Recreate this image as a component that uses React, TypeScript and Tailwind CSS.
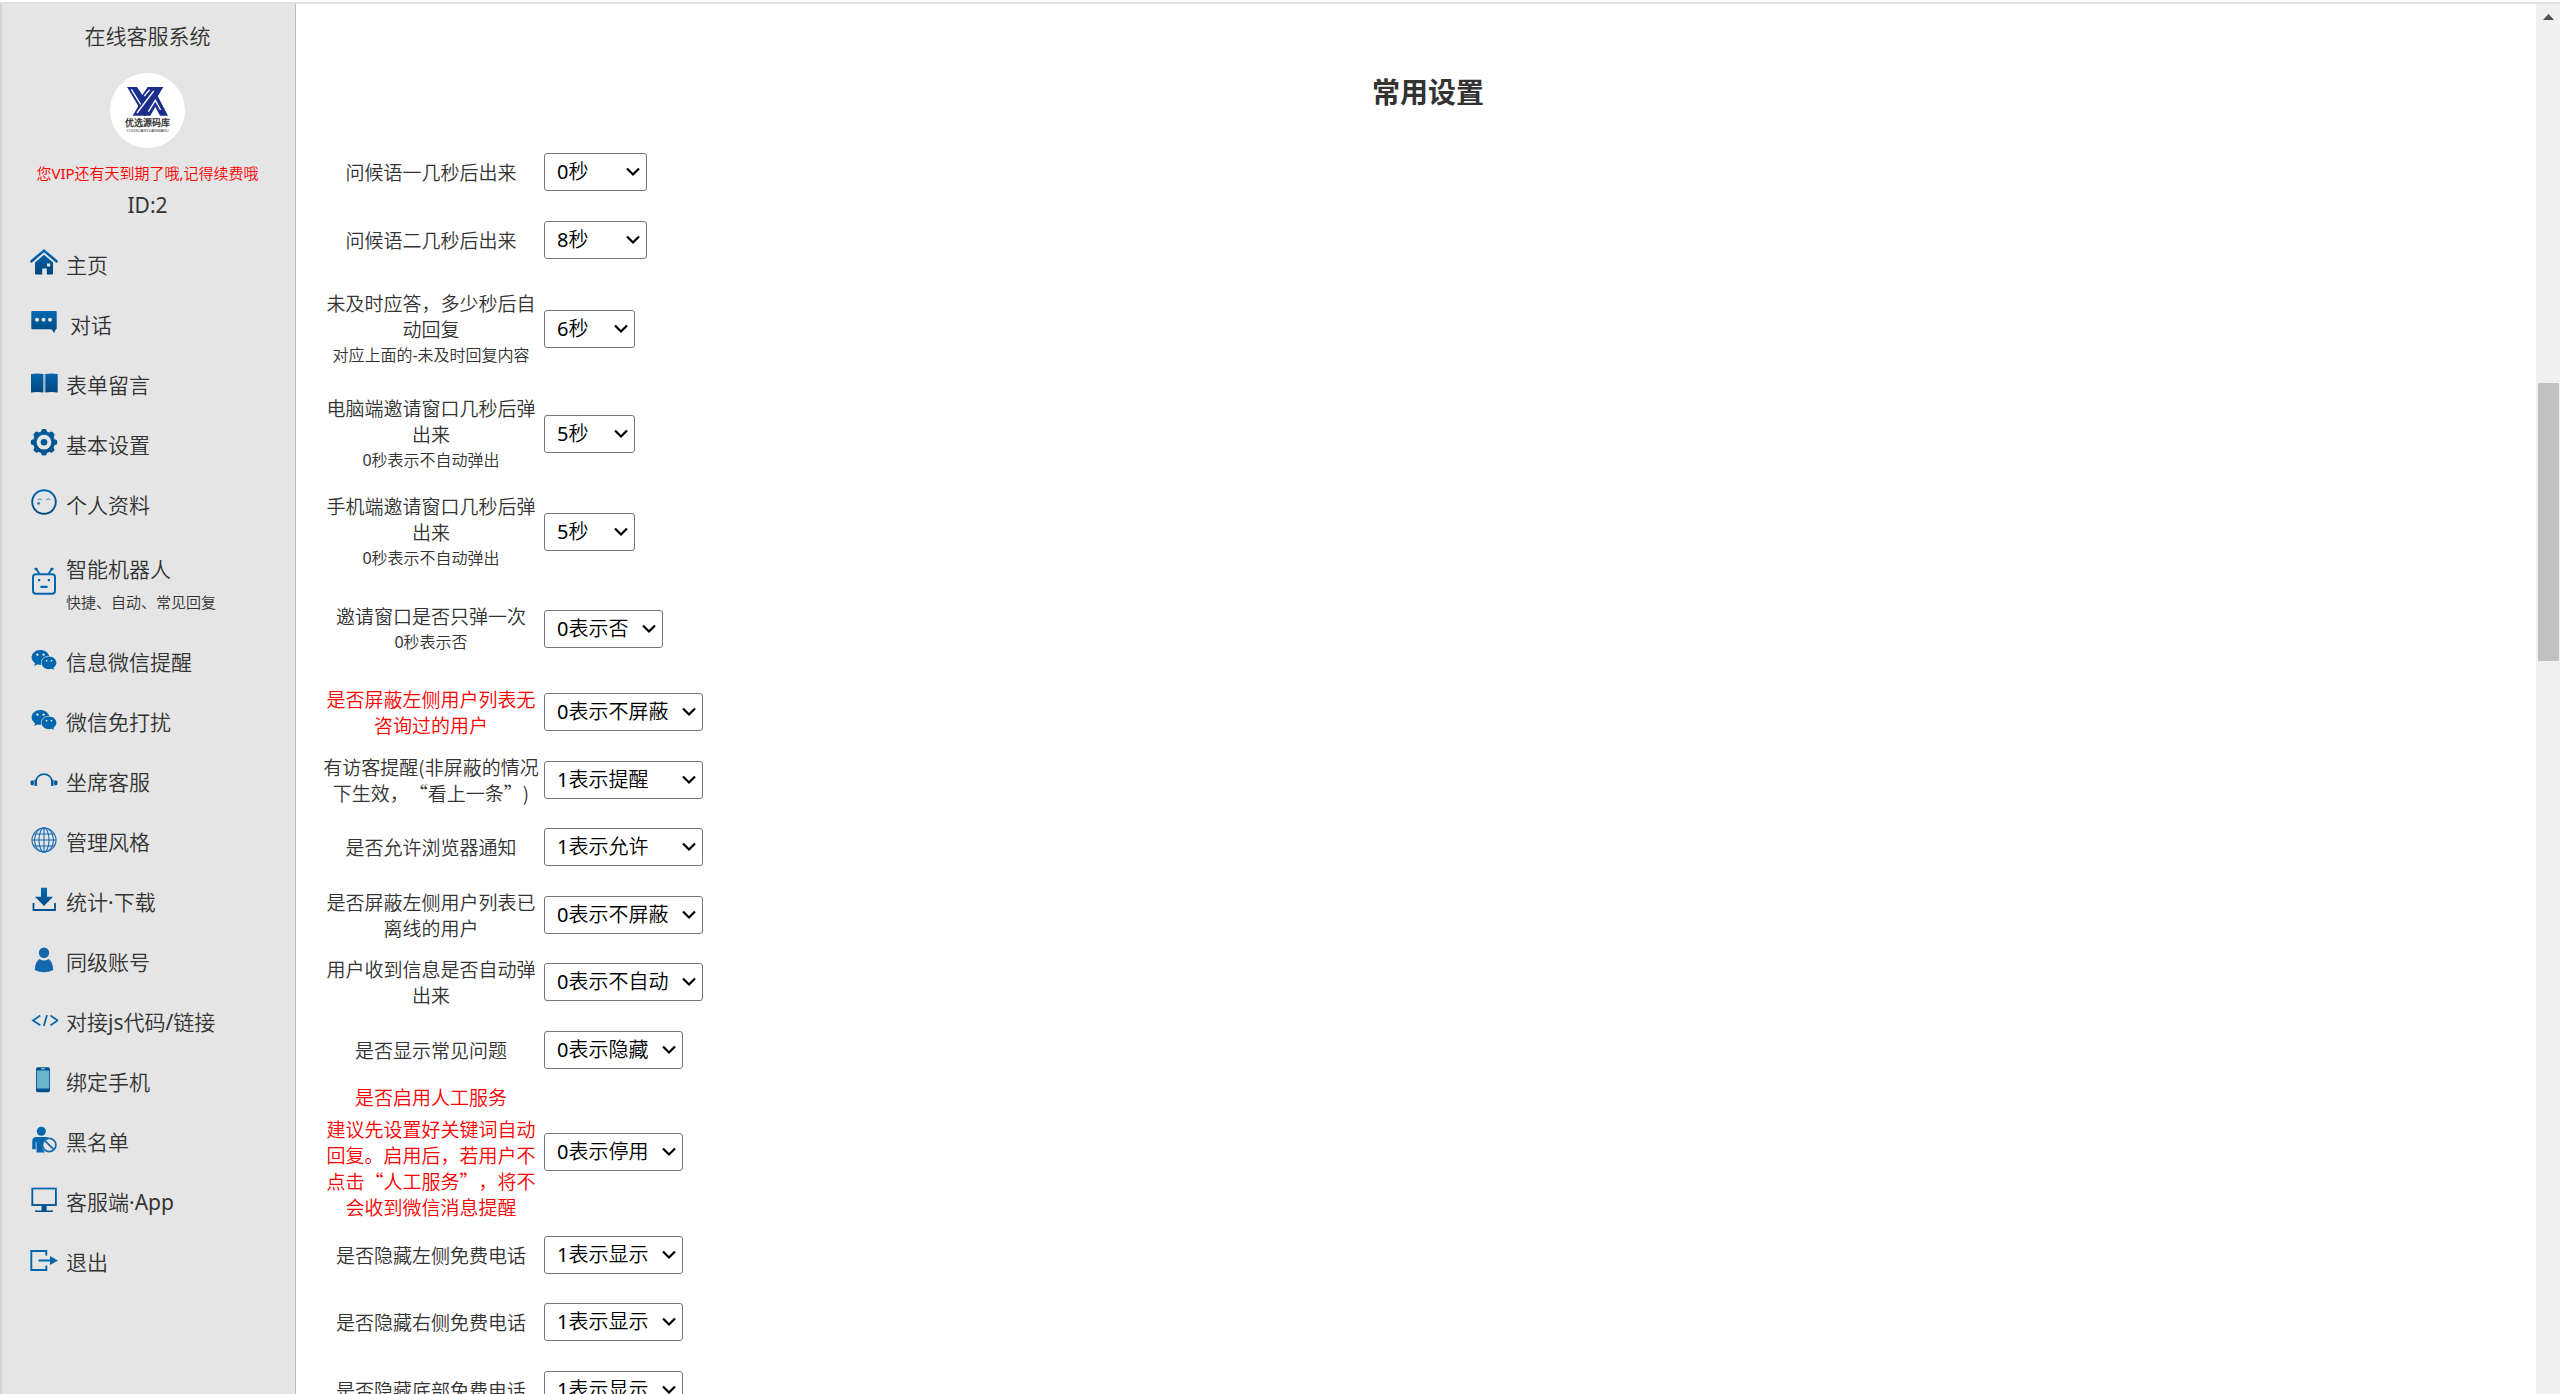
import type { ReactNode } from 'react'
import { FaWeixin } from 'react-icons/fa'

interface NavItem {
    label: string
    icon: ReactNode
    note?: string
    indent?: boolean
}

interface Setting {
    id: string
    label: string
    note?: string
    extra?: string
    red?: boolean
    height?: string
    width: string
    options: string[]
}

function Icon({ children }: { children: ReactNode }) {
    return (
        <svg className="w-7 h-7" viewBox="0 0 28 28" fill="none" aria-hidden="true">
            {children}
        </svg>
    )
}

const HomeIcon = () => (
    <Icon>
        <path d="M1.5 13.3 14 2.6l12.5 10.7" stroke="url(#blue)" strokeWidth="2.6" strokeLinecap="round" />
        <path
            fill="url(#blue)"
            fillRule="evenodd"
            d="M14 6.8l9 7.6v11.2q0 1-1 1h-5.2v-6h-4.6v6H6q-1 0-1-1V14.4zM17 15.4v3.2h3.2v-3.2z"
        />
    </Icon>
)

const ChatIcon = () => (
    <Icon>
        <path
            fill="url(#blue)"
            fillRule="evenodd"
            d="M2.3 3h23.4q1 0 1 1v16.5q0 .8-1 .9l-1.8 3.9q-1.3-3.9-3.2-4.1H2.3q-1 0-1-1V4q0-1 1-1zM7 9.8a2 2 0 1 0 .01 0zM13.5 9.8a2 2 0 1 0 .01 0zM20 9.8a2 2 0 1 0 .01 0z"
        />
    </Icon>
)

const BookIcon = () => (
    <Icon>
        <path fill="url(#blue)" d="M1 5.9q6.2-1 12.4 0v18.5q-6.2-1-12.4 0zM15.3 5.9q6.2-1 12.4 0v18.5q-6.2-1-12.4 0z" />
        <path d="M14.35 6v18" stroke="#8fb0cb" strokeWidth="1" />
    </Icon>
)

const GearIcon = () => (
    <Icon>
        <circle cx="14" cy="14.2" r="9.2" stroke="url(#blue)" strokeWidth="3.6" />
        <circle cx="14" cy="14.2" r="3.3" fill="#005796" />
        {[0, 45, 90, 135, 180, 225, 270, 315].map((deg) => (
            <rect
                key={deg}
                x="11.2"
                y="1"
                width="5.6"
                height="5"
                rx="2"
                fill="#005796"
                transform={`rotate(${deg} 14 14.2)`}
            />
        ))}
    </Icon>
)

const FaceIcon = () => (
    <Icon>
        <circle cx="14" cy="14" r="11.8" stroke="url(#blue)" strokeWidth="2" />
        <path d="M7.8 12l2-1.3 2 1.3M16.3 12l2-1.3 2 1.3" stroke="#3b82b8" strokeWidth="1" />
        <rect x="7" y="14.3" width="3" height="2.2" fill="#3b82b8" />
    </Icon>
)

const RobotIcon = () => (
    <Icon>
        <g stroke="#0068b0" strokeWidth="2" strokeLinecap="round">
            <rect x="3" y="7.2" width="22" height="19.5" rx="3" />
            <path d="M9.3 6.5 5.8 1.5M18.7 6.5l3.5-5" />
            <path d="M11.2 19.8h5.6" strokeWidth="2.2" />
        </g>
        <path fill="#0068b0" d="M8 12h2.2v2.2H8zM17.8 12H20v2.2h-2.2zM4.5 1h3v2h-3zM20.5 1h3v2h-3z" />
    </Icon>
)

const WechatIcon = () => <FaWeixin className="w-[26px] h-7 mx-px pt-0.5" color="#0066ad" aria-hidden="true" />

const HeadsetIcon = () => (
    <Icon>
        <path d="M6 17C6 6.5 22 6.5 22 17" stroke="#0062a8" strokeWidth="1.6" />
        <rect x="0.5" y="15.2" width="3.4" height="5.2" rx="1.7" fill="#00589a" />
        <rect x="24.1" y="15.2" width="3.4" height="5.2" rx="1.7" fill="#00589a" />
        <path d="M5.7 14.6v6.4M22.3 14.6v6.4" stroke="#00589a" strokeWidth="2.4" />
    </Icon>
)

const GlobeIcon = () => (
    <Icon>
        <g stroke="#1a6bae" strokeWidth="1.1">
            <circle cx="14" cy="15" r="12" />
            <ellipse cx="14" cy="15" rx="5" ry="12" />
            <ellipse cx="14" cy="15" rx="9.5" ry="12" />
            <path d="M14 3v24M2 15h24M4 9h20M4 21h20" />
        </g>
    </Icon>
)

const DownloadIcon = () => (
    <Icon>
        <path fill="url(#blue)" d="M11 2.8h6v9h6L14 21 5 11.8h6z" />
        <path d="M3.5 18v7h21.5v-7" stroke="#005190" strokeWidth="1.8" />
    </Icon>
)

const UserIcon = () => (
    <Icon>
        <circle cx="14" cy="7.8" r="5.2" fill="#1468ad" />
        <path fill="#1468ad" d="M9.5 14Q14 17 18.5 14 23 17 23.3 25 14 29.5 4.7 25 5 17 9.5 14z" />
    </Icon>
)

const CodeIcon = () => (
    <Icon>
        <path d="M10.3 10.6 3 15.4l7.3 4.8M20.5 10.6l7.3 4.8-7.3 4.8M17 10l-3.2 11" stroke="#0a66ad" strokeWidth="1.8" />
    </Icon>
)

const PhoneIcon = () => (
    <Icon>
        <rect x="6" y="2.2" width="14" height="25" rx="2" fill="#00508f" />
        <rect x="6.8" y="5.5" width="12.4" height="18" fill="#66b5cc" />
        <path d="M11 3.8h4" stroke="#c9dbe8" strokeWidth="1" />
    </Icon>
)

const BlockIcon = () => (
    <Icon>
        <circle cx="11.3" cy="6.2" r="4.5" fill="#0066ad" />
        <path fill="#0066ad" d="M6.5 12h9.5q2 0 2.8 1.2-6 1.2-7 7 .2 4.5 3.2 7.3H6.5V17h-.8v7.3H2.3V16q0-4 4.2-4z" />
        <circle cx="19.2" cy="20" r="6.7" stroke="#1a6bae" strokeWidth="1.8" />
        <path d="M14.5 15.3l9.4 9.4" stroke="#1a6bae" strokeWidth="1.8" />
    </Icon>
)

const MonitorIcon = () => (
    <Icon>
        <rect x="2.3" y="3.5" width="23.6" height="16.5" stroke="url(#blue)" strokeWidth="1.8" />
        <path fill="#00508f" d="M11.6 20.5h5v5h-5zM5 25.5h18V27H5z" />
    </Icon>
)

const LogoutIcon = () => (
    <Icon>
        <path d="M16.3 10.5V6H1.3v19h15v-4.5" stroke="#0066ad" strokeWidth="1.9" />
        <path d="M8.5 15.5H22" stroke="#0066ad" strokeWidth="2" />
        <path fill="#0066ad" d="M20 11l8 4.5-8 4.5z" />
    </Icon>
)

const navItems: NavItem[] = [
    { label: '主页', icon: <HomeIcon /> },
    { label: '对话', icon: <ChatIcon />, indent: true },
    { label: '表单留言', icon: <BookIcon /> },
    { label: '基本设置', icon: <GearIcon /> },
    { label: '个人资料', icon: <FaceIcon /> },
    { label: '智能机器人', icon: <RobotIcon />, note: '快捷、自动、常见回复' },
    { label: '信息微信提醒', icon: <WechatIcon /> },
    { label: '微信免打扰', icon: <WechatIcon /> },
    { label: '坐席客服', icon: <HeadsetIcon /> },
    { label: '管理风格', icon: <GlobeIcon /> },
    { label: '统计·下载', icon: <DownloadIcon /> },
    { label: '同级账号', icon: <UserIcon /> },
    { label: '对接js代码/链接', icon: <CodeIcon /> },
    { label: '绑定手机', icon: <PhoneIcon /> },
    { label: '黑名单', icon: <BlockIcon /> },
    { label: '客服端·App', icon: <MonitorIcon /> },
    { label: '退出', icon: <LogoutIcon /> },
]

const settings: Setting[] = [
    { id: 'greet1', label: '问候语一几秒后出来', width: 'w-[103px]', options: ['0秒', '3秒', '5秒', '10秒'] },
    { id: 'greet2', label: '问候语二几秒后出来', width: 'w-[103px]', options: ['8秒', '10秒', '15秒'] },
    {
        id: 'reply',
        label: '未及时应答，多少秒后自动回复',
        note: '对应上面的-未及时回复内容',
        height: 'h-28',
        width: 'w-[91px]',
        options: ['6秒', '10秒'],
    },
    {
        id: 'invitePc',
        label: '电脑端邀请窗口几秒后弹出来',
        note: '0秒表示不自动弹出',
        height: 'h-[98px]',
        width: 'w-[91px]',
        options: ['5秒', '0秒'],
    },
    {
        id: 'inviteMobile',
        label: '手机端邀请窗口几秒后弹出来',
        note: '0秒表示不自动弹出',
        height: 'h-[97px]',
        width: 'w-[91px]',
        options: ['5秒', '0秒'],
    },
    {
        id: 'inviteOnce',
        label: '邀请窗口是否只弹一次',
        note: '0秒表示否',
        height: 'h-[98px]',
        width: 'w-[119px]',
        options: ['0表示否', '1表示是'],
    },
    { id: 'hideSilent', label: '是否屏蔽左侧用户列表无咨询过的用户', red: true, width: 'w-[159px]', options: ['0表示不屏蔽', '1表示屏蔽'] },
    { id: 'visitor', label: '有访客提醒(非屏蔽的情况下生效，“看上一条”)', width: 'w-[159px]', options: ['1表示提醒', '0表示不提醒'] },
    { id: 'notify', label: '是否允许浏览器通知', width: 'w-[159px]', options: ['1表示允许', '0表示不允许'] },
    { id: 'hideOffline', label: '是否屏蔽左侧用户列表已离线的用户', width: 'w-[159px]', options: ['0表示不屏蔽', '1表示屏蔽'] },
    { id: 'autoOpen', label: '用户收到信息是否自动弹出来', width: 'w-[159px]', options: ['0表示不自动', '1表示自动'] },
    { id: 'faq', label: '是否显示常见问题', width: 'w-[139px]', options: ['0表示隐藏', '1表示显示'] },
    {
        id: 'manual',
        label: '是否启用人工服务',
        extra: '建议先设置好关键词自动回复。启用后，若用户不点击“人工服务”，将不会收到微信消息提醒',
        red: true,
        height: 'h-[138px]',
        width: 'w-[139px]',
        options: ['0表示停用', '1表示启用'],
    },
    { id: 'telLeft', label: '是否隐藏左侧免费电话', width: 'w-[139px]', options: ['1表示显示', '0表示隐藏'] },
    { id: 'telRight', label: '是否隐藏右侧免费电话', width: 'w-[139px]', options: ['1表示显示', '0表示隐藏'] },
    { id: 'telBottom', label: '是否隐藏底部免费电话', width: 'w-[139px]', options: ['1表示显示', '0表示隐藏'] },
]

function Logo() {
    return (
        <div className="flex flex-col items-center w-[75px] h-[75px] pt-[14px] rounded-full bg-white">
            <svg className="w-[41px] h-[29px]" viewBox="0 0 123 87" fill="#1c2e8c" aria-hidden="true">
                <path d="M0 0H30L46 24 62 0H109L57 86H17L34 57z" />
                <path d="M76 34l11-17 36 69H99L85 59 70 86H50z" />
                <path d="M13 7l28 45M52 27l16-19M30 78l50-66M64 74l21-34 16 29" fill="none" stroke="#fff" strokeWidth="4" />
            </svg>
            <span className="text-[9px] leading-[13px] font-bold">优选源码库</span>
            <span className="text-[4px] leading-[4px] font-['Liberation_Sans']">YOUXUANYUANMAKU</span>
        </div>
    )
}

function Sidebar() {
    return (
        <aside className="shrink-0 w-[296px] bg-[#e5e5e5] border-l-2 border-l-[#d3d3d3] border-r border-r-[#bbb] overflow-hidden">
            <svg className="absolute w-0 h-0" aria-hidden="true">
                <defs>
                    <linearGradient id="blue" x1="0" y1="0" x2="0" y2="28" gradientUnits="userSpaceOnUse">
                        <stop offset="0" stopColor="#006dba" />
                        <stop offset="1" stopColor="#004274" />
                    </linearGradient>
                </defs>
            </svg>
            <div className="flex flex-col items-center pt-4 pr-0.5 h-[231px] text-[21px]">
                <div className="leading-8">在线客服系统</div>
                <div className="mt-[21px] mb-[9px]">
                    <Logo />
                </div>
                <div className="text-[15px] leading-8 text-[#f00]">您VIP还有天到期了哦,记得续费哦</div>
                <div className="leading-8">ID:2</div>
            </div>
            <nav>
                {navItems.map(({ label, icon, note, indent }) => (
                    <a key={label} href="#" className={`flex items-center pl-7 ${note ? 'h-[97px]' : 'h-[60px]'}`}>
                        <span className="shrink-0 mb-1.5 mr-2">{icon}</span>
                        <span className={indent ? 'pl-1' : ''}>
                            <span className="block text-[21px] leading-9">{label}</span>
                            {note && <span className="block text-[15px] leading-[30px]">{note}</span>}
                        </span>
                    </a>
                ))}
            </nav>
        </aside>
    )
}

function SettingRow({ id, label, note, extra, red, height, width, options }: Setting) {
    return (
        <div className={`flex items-center gap-0.5 ${height ?? 'odd:h-[68px] even:h-[67px]'}`}>
            <label
                htmlFor={id}
                className={`shrink-0 w-[222px] text-center text-[19px] leading-[26px] ${red ? 'text-[#f00]' : ''}`}
            >
                <span className="block font-['Noto_Sans_CJK_SC',sans-serif] font-[350]">{label}</span>
                {note && <span className="block text-base leading-[26px]">{note}</span>}
                {extra && <span className="block mt-1.5 font-['Noto_Sans_CJK_SC',sans-serif] font-[350]">{extra}</span>}
            </label>
            <div className={`relative ${width}`}>
                <select
                    id={id}
                    className="block w-full h-[38px] pl-3 pr-6 appearance-none border border-[#767676] rounded-[3px] bg-white text-xl leading-7 text-black"
                >
                    {options.map((option) => (
                        <option key={option}>{option}</option>
                    ))}
                </select>
                <svg
                    className="absolute right-[7px] top-[14px] w-[14px] h-[10px] pointer-events-none"
                    viewBox="0 0 14 10"
                    fill="none"
                    aria-hidden="true"
                >
                    <path d="M1 1.5l6 6 6-6" stroke="#000" strokeWidth="2.2" />
                </svg>
            </div>
        </div>
    )
}

function ScrollBar() {
    return (
        <div className="flex flex-col shrink-0 w-6 bg-[#f0f0f0]" aria-hidden="true">
            <div className="flex justify-center pt-2.5 h-[18px]">
                <svg className="w-[11px] h-[6px]" viewBox="0 0 11 6" fill="#505050">
                    <path d="M5.5 0L11 6H0z" />
                </svg>
            </div>
            <div className="basis-[26%]" />
            <div className="basis-1/5 ml-0.5 mr-px bg-[#c1c1c1]" />
        </div>
    )
}

export default function App() {
    return (
        <div
            lang="zh-CN"
            className="flex flex-col h-screen pt-0.5 overflow-hidden bg-white font-['Noto_Sans','Noto_Sans_CJK_SC_DemiLight','Noto_Sans_CJK_SC',sans-serif] font-normal text-[#333] [text-spacing-trim:space-all]"
        >
            <div className="shrink-0 h-0.5 bg-[#e1e1e1]" />
            <div className="flex grow min-h-0">
                <Sidebar />
                <main className="grow min-w-0 pl-6 pt-[67px] overflow-hidden">
                    <h1 className="mb-[27px] text-center text-[28px] leading-10 font-['Noto_Sans_CJK_SC',sans-serif] font-bold">
                        常用设置
                    </h1>
                    <form>
                        {settings.map((setting) => (
                            <SettingRow key={setting.id} {...setting} />
                        ))}
                    </form>
                </main>
                <ScrollBar />
            </div>
        </div>
    )
}
